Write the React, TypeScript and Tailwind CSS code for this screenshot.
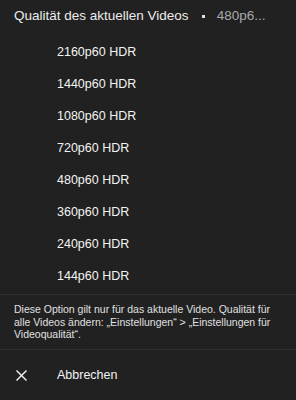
export default function App() {
  const options = ['2160p60 HDR', '1440p60 HDR', '1080p60 HDR', '720p60 HDR', '480p60 HDR', '360p60 HDR', '240p60 HDR', '144p60 HDR']

  return (
    <div className="w-[296px] h-[400px] bg-[#212121] text-[#f1f1f1] overflow-hidden" style={{ fontFamily: '"Liberation Sans", Arial, sans-serif' }}>
      {/* Header */}
      <div className="flex items-center h-[33px] pl-[14px] whitespace-nowrap">
        <span className="text-[13.5px] text-[#ececec]">Qualität des aktuellen Videos</span>
        <span className="w-[3px] h-[3px] bg-[#e0e0e0] ml-[13px] mr-[12px]" />
        <span className="text-[13.5px] text-[#a8a8a8]">480p6...</span>
      </div>

      {/* Options */}
      <div className="pt-[3px] pb-[2px]">
        {options.map(o => (
          <div key={o} className="h-[32px] flex items-center pl-[57px] text-[12.5px] text-[#f3f3f3]">
            {o}
          </div>
        ))}
      </div>

      <div className="h-px bg-[#303030]" />

      {/* Note */}
      <div className="px-[14px] pt-[8px] pb-[8px] text-[10.5px] leading-[12.5px] text-[#e0e0e0]">
        Diese Option gilt nur für das aktuelle Video. Qualität für alle Videos ändern: „Einstellungen“ &gt; „Einstellungen für Videoqualität“.
      </div>

      <div className="h-px bg-[#303030]" />

      {/* Cancel */}
      <div className="flex items-center h-[51px]">
        <div className="w-[57px] flex items-center pl-[16px]">
          <svg className="w-[11px] h-[11px] text-[#f1f1f1]" viewBox="0 0 11 11" fill="none" stroke="currentColor" strokeWidth={1.4}>
            <line x1="0.5" y1="0.5" x2="10.5" y2="10.5" />
            <line x1="10.5" y1="0.5" x2="0.5" y2="10.5" />
          </svg>
        </div>
        <span className="text-[12.5px] text-[#f3f3f3]">Abbrechen</span>
      </div>
    </div>
  )
}
